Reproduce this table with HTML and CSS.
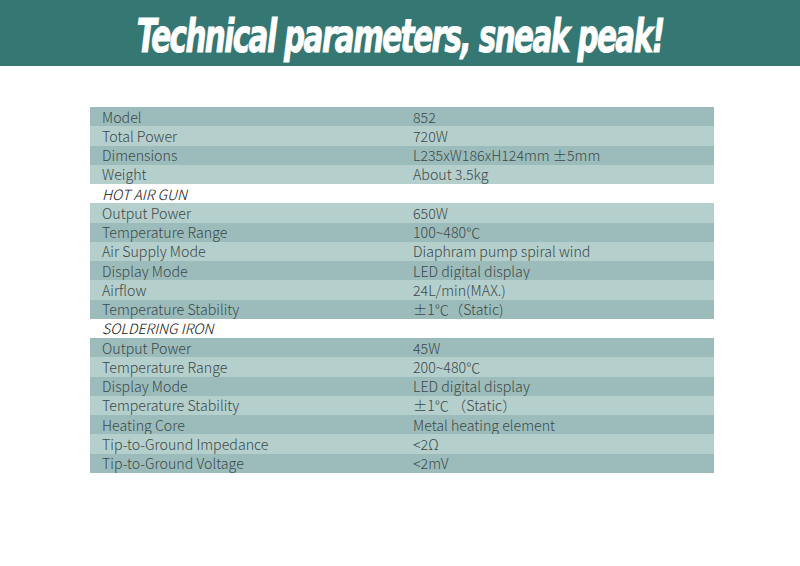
FILE: index.html
```html
<!DOCTYPE html>
<html>
<head>
<meta charset="utf-8">
<link rel="stylesheet" href="styles.css">
</head>
<body>
<header class="banner"><h1 class="title">Technical parameters, sneak peak!</h1></header>
<main class="wrap">
<div class="specs">
  <div class="row dark"><span class="k">Model</span><span class="v">852</span></div>
  <div class="row light"><span class="k">Total Power</span><span class="v">720W</span></div>
  <div class="row dark"><span class="k">Dimensions</span><span class="v">L235xW186xH124mm ±5mm</span></div>
  <div class="row light"><span class="k">Weight</span><span class="v">About 3.5kg</span></div>
  <div class="row section"><span class="k">HOT AIR GUN</span></div>
  <div class="row light"><span class="k">Output Power</span><span class="v">650W</span></div>
  <div class="row dark"><span class="k">Temperature Range</span><span class="v">100~480℃</span></div>
  <div class="row light"><span class="k">Air Supply Mode</span><span class="v">Diaphram pump spiral wind</span></div>
  <div class="row dark"><span class="k">Display Mode</span><span class="v">LED digital display</span></div>
  <div class="row light"><span class="k">Airflow</span><span class="v">24L/min(MAX.)</span></div>
  <div class="row dark"><span class="k">Temperature Stability</span><span class="v">±1℃（Static)</span></div>
  <div class="row section"><span class="k">SOLDERING IRON</span></div>
  <div class="row dark"><span class="k">Output Power</span><span class="v">45W</span></div>
  <div class="row light"><span class="k">Temperature Range</span><span class="v">200~480℃</span></div>
  <div class="row dark"><span class="k">Display Mode</span><span class="v">LED digital display</span></div>
  <div class="row light"><span class="k">Temperature Stability</span><span class="v">±1℃ （Static）</span></div>
  <div class="row dark"><span class="k">Heating Core</span><span class="v">Metal heating element</span></div>
  <div class="row light"><span class="k">Tip-to-Ground Impedance</span><span class="v">&lt;2Ω</span></div>
  <div class="row dark"><span class="k">Tip-to-Ground Voltage</span><span class="v">&lt;2mV</span></div>
</div>
</main>
</body>
</html>
```
FILE: styles.css
```css
* { box-sizing: border-box; }
html, body { margin: 0; padding: 0; background: #fff; }
body { width: 800px; height: 566px; overflow: hidden; }
.banner {
  height: 66px;
  background: #347773;
  display: flex;
  align-items: center;
  justify-content: center;
}
.title {
  margin: 5px 0 0;
  color: #fff;
  font-family: "DejaVu Sans Condensed", "DejaVu Sans", sans-serif;
  font-weight: 700;
  font-style: italic;
  font-size: 38px;
  letter-spacing: -1.8px;
  white-space: nowrap;
  -webkit-text-stroke: 0.8px #fff;
  transform: scale(0.86, 1.2);
}
.wrap { padding: 41px 86px 0 90px; }
.specs {
  display: grid;
  grid-template-rows: repeat(19, 1fr);
  height: 366px;
  font-family: "Noto Sans CJK SC", "Noto Sans", sans-serif;
  font-weight: 300;
  font-size: 14.2px;
  color: #3d4949;
}
.row {
  display: grid;
  grid-template-columns: 311px 1fr;
  align-items: center;
  padding-left: 12px;
  line-height: 1;
}
.dark { background: #9bbcbb; }
.light { background: #b4cfcc; }
.section { background: #fff; font-style: italic; color: #111; }
```
